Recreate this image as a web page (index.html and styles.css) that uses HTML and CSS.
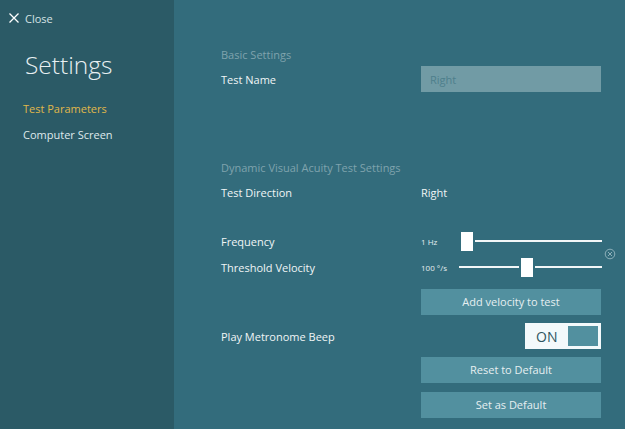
FILE: index.html
```html
<!DOCTYPE html>
<html lang="en">
<head>
    <meta charset="UTF-8">
    <title>Settings</title>
    <link rel="stylesheet" href="styles.css">
</head>
<body>
    <div class="app">
        <div class="sidebar">
            <div class="close">
                <svg class="close_icon" width="10" height="10" viewBox="0 0 10 10">
                    <path d="M0.5 0.5L9.5 9.5M9.5 0.5L0.5 9.5" stroke="#fff" stroke-width="1.3" fill="none"/>
                </svg>
                <span>Close</span>
            </div>
            <h1 class="title">Settings</h1>
            <div class="nav nav_active">Test Parameters</div>
            <div class="nav">Computer Screen</div>
        </div>
        <div class="main">
            <div class="heading heading_basic">Basic Settings</div>
            <div class="row row_name">
                <div class="label">Test Name</div>
                <div class="input">Right</div>
            </div>
            <div class="heading heading_dynamic">Dynamic Visual Acuity Test Settings</div>
            <div class="row row_direction">
                <div class="label">Test Direction</div>
                <div class="value">Right</div>
            </div>
            <div class="sliders">
                <div class="row row_slider">
                    <div class="label">Frequency</div>
                    <div class="slider_value">1 Hz</div>
                    <div class="slider slider_freq">
                        <div class="handle"></div>
                        <div class="track"></div>
                    </div>
                </div>
                <div class="row row_slider">
                    <div class="label">Threshold Velocity</div>
                    <div class="slider_value">100 °/s</div>
                    <div class="slider">
                        <div class="track track_left"></div>
                        <div class="handle"></div>
                        <div class="track"></div>
                    </div>
                </div>
                <svg class="clear_icon" width="12" height="12" viewBox="0 0 12 12">
                    <circle cx="6" cy="6" r="4.8" stroke="#8db0ba" fill="none"/>
                    <path d="M4 4L8 8M8 4L4 8" stroke="#8db0ba" fill="none"/>
                </svg>
            </div>
            <div class="row row_add">
                <button class="btn">Add velocity to test</button>
            </div>
            <div class="row row_beep">
                <div class="label">Play Metronome Beep</div>
                <div class="toggle">
                    <span class="toggle_text">ON</span>
                    <div class="toggle_knob"></div>
                </div>
            </div>
            <div class="row row_reset">
                <button class="btn">Reset to Default</button>
            </div>
            <div class="row row_set">
                <button class="btn">Set as Default</button>
            </div>
        </div>
    </div>
</body>
</html>
```

FILE: styles.css
```css
* {
    box-sizing: border-box;
}
html, body {
    margin: 0;
    height: 100%;
    overflow: hidden;
}
body {
    font-family: "Open Sans", "Noto Sans", sans-serif;
    font-size: 11px;
    color: #f0f5f6;
}
.app {
    display: flex;
    width: 625px;
    height: 429px;
}
.sidebar {
    width: 174px;
    background: #2b5a66;
    padding: 10px 0 0 23px;
}
.close {
    display: flex;
    align-items: center;
    height: 16px;
    margin-left: -15px;
    color: #d5e2e5;
}
.close_icon {
    margin-left: 1px;
    margin-right: 6px;
}
.title {
    margin: 18px 0 0 2px;
    height: 42px;
    font-size: 24.5px;
    line-height: 42px;
    font-weight: 300;
    color: #e8f0f2;
}
.nav {
    height: 26px;
    line-height: 26px;
    color: #dfe9ec;
}
.nav_active {
    margin-top: 10px;
    color: #e0b84a;
}
.main {
    flex: 1;
    background: #336c7c;
    padding: 47px 24px 0 47px;
}
.heading {
    height: 16px;
    line-height: 16px;
    color: #7fa3ad;
}
.row {
    display: flex;
    align-items: center;
    justify-content: space-between;
}
.label {
    width: 200px;
}
.row_name {
    height: 26px;
    margin-top: 3px;
}
.input {
    width: 180px;
    height: 26px;
    line-height: 27px;
    padding-left: 9px;
    background: #719ba5;
    color: #4e7f8c;
}
.heading_dynamic {
    margin-top: 68px;
}
.row_direction {
    height: 18px;
    margin-top: 7px;
}
.value {
    width: 180px;
}
.sliders {
    position: relative;
    margin-top: 30px;
}
.row_slider {
    height: 20px;
    justify-content: flex-start;
}
.row_slider + .row_slider {
    margin-top: 6px;
}
.slider_value {
    width: 38px;
    font-size: 8px;
    color: #e3ecee;
}
.slider {
    display: flex;
    align-items: center;
    flex: 1;
    height: 20px;
    margin-right: -1px;
}
.slider_freq {
    padding-left: 2px;
}
.handle {
    width: 12px;
    height: 19px;
    background: #fff;
}
.track {
    flex: 1;
    height: 2px;
    margin-left: 2px;
    background: #f2f6f7;
}
.track_left {
    flex: none;
    width: 60px;
    margin-left: 0;
    margin-right: 2px;
}
.clear_icon {
    position: absolute;
    right: -15px;
    top: 17px;
}
.row_add {
    justify-content: flex-end;
    margin-top: 12px;
}
.btn {
    width: 180px;
    height: 26px;
    padding: 0 0 2px;
    border: 0;
    border-radius: 0;
    background: #52909f;
    color: #e6eff1;
    font: inherit;
}
.row_beep {
    height: 26px;
    margin-top: 8px;
}
.toggle {
    display: flex;
    align-items: center;
    justify-content: space-between;
    width: 76px;
    height: 26px;
    padding: 3px;
    background: #f3f9fb;
}
.toggle_text {
    margin-left: 8px;
    font-size: 14px;
    color: #2f5560;
}
.toggle_knob {
    width: 30px;
    height: 20px;
    background: #52909f;
}
.row_reset, .row_set {
    justify-content: flex-end;
}
.row_reset {
    margin-top: 8px;
}
.row_set {
    margin-top: 9px;
}
```
